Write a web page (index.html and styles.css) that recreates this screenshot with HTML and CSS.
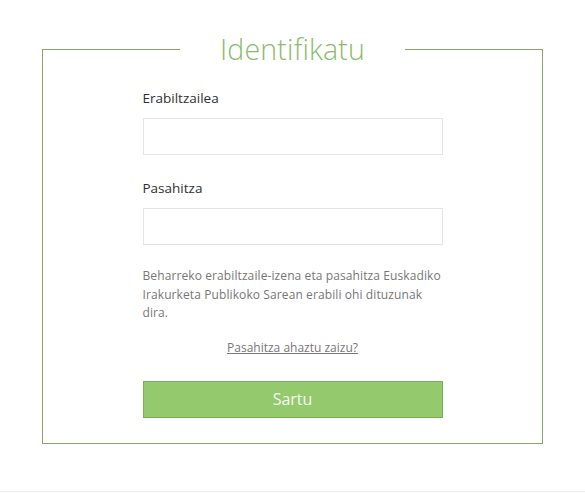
FILE: index.html
```html
<!DOCTYPE html>
<html lang="eu">
<head>
    <meta charset="UTF-8">
    <title>Identifikatu</title>
    <link rel="stylesheet" href="styles.css">
</head>
<body>
    <div class="page">
        <form class="login" onsubmit="return false;">
            <fieldset class="login-box">
                <legend class="login-title">Identifikatu</legend>
                <div class="login-fields">
                    <label class="field-label" for="user">Erabiltzailea</label>
                    <input class="field-input" type="text" id="user">
                    <label class="field-label" for="pass">Pasahitza</label>
                    <input class="field-input" type="password" id="pass">
                    <p class="login-note">Beharreko erabiltzaile-izena eta pasahitza Euskadiko Irakurketa Publikoko Sarean erabili ohi dituzunak dira.</p>
                    <a class="forgot-link" href="#">Pasahitza ahaztu zaizu?</a>
                    <button class="login-button" type="submit">Sartu</button>
                </div>
            </fieldset>
        </form>
    </div>
    <div class="footer"></div>
</body>
</html>
```

FILE: styles.css
```css
body {
    margin: 0;
    font-family: "Open Sans", Arial, sans-serif;
    background-color: #fff;
    color: #333;
}

.page {
    height: 491px;
    padding-top: 33px;
    box-sizing: border-box;
}

.login {
    width: 501px;
    margin-left: 42px;
}

.login-box {
    margin: 0;
    padding: 23px 0 25px 0;
    border: 1px solid #8aa56c;
}

.login-title {
    margin: 0 auto;
    padding: 0 40px;
    font-size: 28.5px;
    font-weight: 300;
    line-height: 32px;
    letter-spacing: 0.2px;
    color: #8bbb6c;
}

.login-fields {
    width: 300px;
    margin: 0 auto;
    display: flex;
    flex-direction: column;
}

.field-label {
    font-size: 13.5px;
    line-height: 20px;
    margin-bottom: 10px;
    color: #2f2f2f;
}

.field-input {
    height: 37px;
    box-sizing: border-box;
    border: 1px solid #e4e4e4;
    margin: 0 0 23px 0;
    padding: 0 8px;
    font-size: 14px;
}

.field-input:last-of-type {
    margin-bottom: 22px;
}

.login-note {
    margin: 0;
    font-size: 12px;
    line-height: 18.5px;
    letter-spacing: 0.1px;
    color: #777;
}

.forgot-link {
    margin-top: 16px;
    align-self: center;
    font-size: 12px;
    line-height: 18px;
    color: #777;
}

.login-button {
    margin-top: 24px;
    height: 37px;
    border: 1px solid #7fab5c;
    background-color: #94c96e;
    color: #f4fbef;
    font-family: "Open Sans", Arial, sans-serif;
    font-size: 16px;
}

.footer {
    border-top: 1px solid #eeeeee;
}
```
